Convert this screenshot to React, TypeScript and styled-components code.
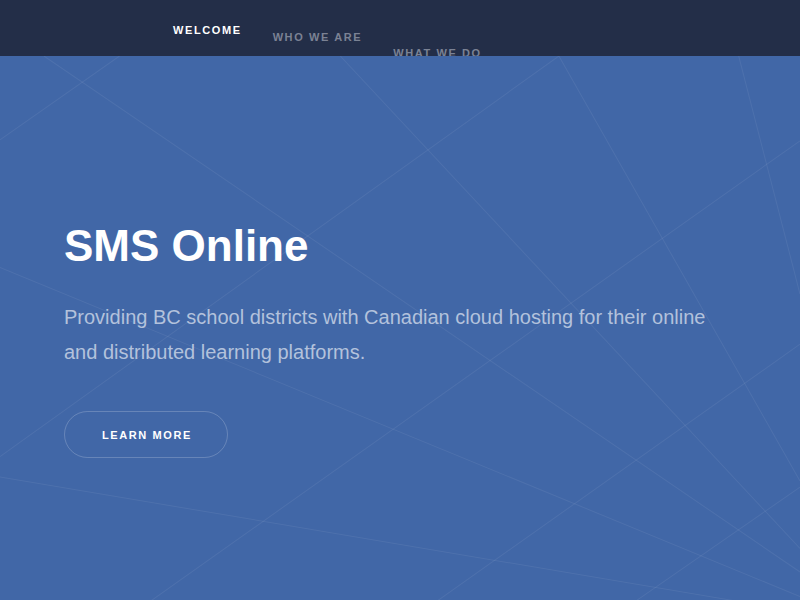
import * as React from 'react';
import styled, { createGlobalStyle } from 'styled-components';

interface NavItem {
    label: string;
    active?: boolean;
    drop: number;
}

const NAV_ITEMS: NavItem[] = [
    { label: 'Welcome', active: true, drop: 0 },
    { label: 'Who we are', drop: 7 },
    { label: 'What we do', drop: 23 },
];

// faint geometric lines behind the hero, hero-local coordinates
const BG_LINES: [number, number, number, number][] = [
    [0, 82, 117, 0],
    [43, 0, 783, 505],
    [333, 0, 783, 482],
    [547, 0, 0, 392],
    [547, 0, 783, 416],
    [783, 83, 0, 638],
    [723, 0, 783, 233],
    [0, 207, 783, 529],
    [0, 412, 783, 544],
    [783, 282, 300, 624],
    [783, 422, 607, 544],
];

const App: React.FC = () => (
    <Page>
        <GlobalStyle />
        <Header>
            <Nav>
                {NAV_ITEMS.map((item) => (
                    <NavLink key={item.label} $active={item.active} $drop={item.drop}>
                        {item.label}
                    </NavLink>
                ))}
            </Nav>
        </Header>
        <Hero>
            <Lines viewBox="0 0 783 644" preserveAspectRatio="xMinYMin slice">
                {BG_LINES.map(([x1, y1, x2, y2], i) => (
                    <line key={i} x1={x1} y1={y1} x2={x2} y2={y2} />
                ))}
            </Lines>
            <HeroContent>
                <Title>SMS Online</Title>
                <Lead>
                    Providing BC school districts with Canadian cloud hosting for their online and distributed
                    learning platforms.
                </Lead>
                <LearnMore>Learn more</LearnMore>
            </HeroContent>
        </Hero>
    </Page>
);

const GlobalStyle = createGlobalStyle`
    html {
        overflow-y: scroll;
    }
    html, body {
        margin: 0;
        padding: 0;
    }
    body {
        font-family: "Liberation Sans", Arial, sans-serif;
        background: #4167a7;
    }
    ::-webkit-scrollbar {
        width: 17px;
        background: #f1f1f1;
    }
    ::-webkit-scrollbar-thumb {
        background: #c1c1c1;
        border-left: 2px solid #f1f1f1;
        border-right: 2px solid #f1f1f1;
        background-clip: padding-box;
    }
    ::-webkit-scrollbar-button:single-button {
        height: 17px;
        background: #f1f1f1;
    }
`;

const Page = styled.div`
    display: flex;
    flex-direction: column;
`;

const Header = styled.header`
    height: 56px;
    overflow: hidden;
    background: #232e48;
`;

const Nav = styled.nav`
    display: flex;
    align-items: flex-start;
    gap: 31px;
    padding: 23px 0 0 173px;
`;

const NavLink = styled.a<{ $active?: boolean; $drop: number }>`
    margin-top: ${(p) => p.$drop}px;
    font-size: 11px;
    line-height: 14px;
    font-weight: 700;
    letter-spacing: 1.6px;
    text-transform: uppercase;
    color: ${(p) => (p.$active ? '#ffffff' : '#7b8294')};
    cursor: pointer;
`;

const Hero = styled.section`
    position: relative;
    height: 644px;
    background: #4167a7;
    overflow: hidden;
`;

const Lines = styled.svg`
    position: absolute;
    inset: 0;
    width: 100%;
    height: 100%;
    stroke: rgba(255, 255, 255, 0.065);
    stroke-width: 1;
`;

const HeroContent = styled.div`
    position: relative;
    display: flex;
    flex-direction: column;
    align-items: flex-start;
    padding: 163px 64px 0;
`;

const Title = styled.h1`
    margin: 0;
    font-size: 44px;
    line-height: 53px;
    font-weight: 700;
    color: #ffffff;
`;

const Lead = styled.p`
    margin: 28px 0 0;
    max-width: 660px;
    font-size: 20px;
    line-height: 35px;
    color: #b3c2dc;
`;

const LearnMore = styled.button`
    margin-top: 41px;
    height: 47px;
    padding: 0 35px 0 37px;
    border: 1px solid rgba(255, 255, 255, 0.2);
    border-radius: 24px;
    background: transparent;
    font-family: "Liberation Sans", Arial, sans-serif;
    font-size: 11px;
    font-weight: 700;
    letter-spacing: 1.6px;
    text-transform: uppercase;
    color: #ffffff;
    cursor: pointer;
`;

export default App;
